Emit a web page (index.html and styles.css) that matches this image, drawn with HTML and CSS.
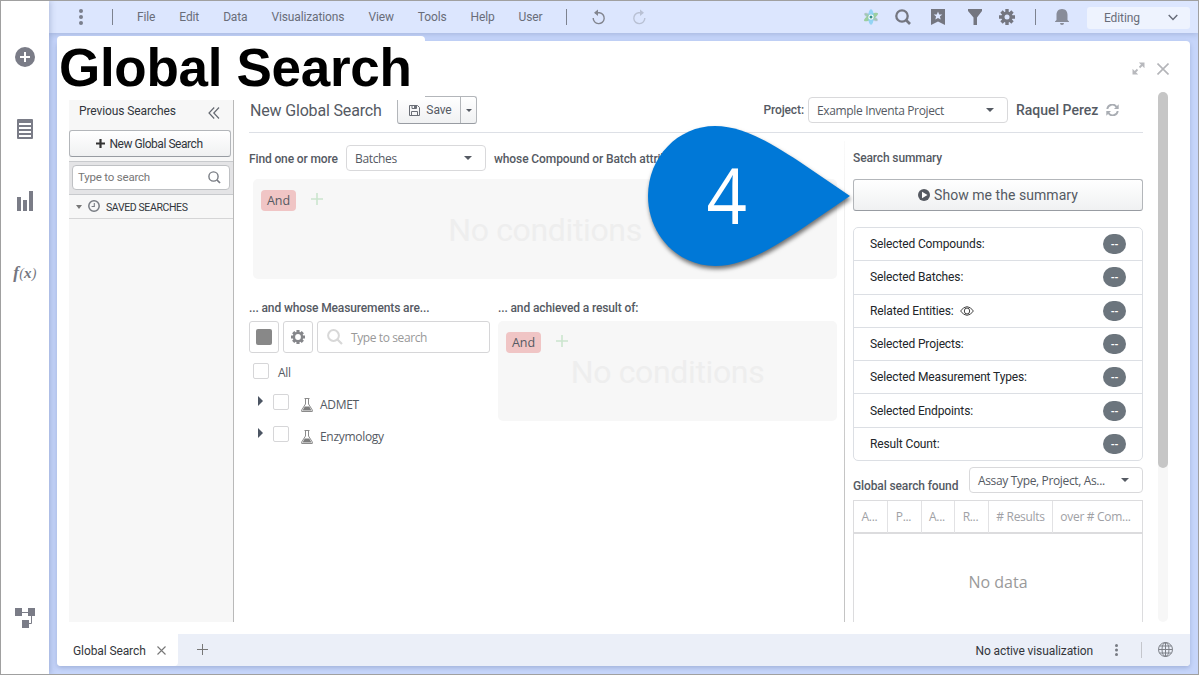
FILE: index.html
```html
<!DOCTYPE html>
<html lang="en">
<head>
    <meta charset="utf-8">
    <title>Global Search</title>
    <link rel="stylesheet" href="styles.css">
</head>
<body>
<div class="app">
    <nav class="rail">
        <svg class="rail-add" width="20" height="20" viewBox="0 0 20 20"><circle cx="10" cy="10" r="10" fill="#7a7c87"/><path d="M10 5v10M5 10h10" stroke="#fff" stroke-width="2"/></svg>
        <svg class="rail-list" width="16" height="20" viewBox="0 0 16 20"><rect width="16" height="20" rx="1" fill="#7a7c87"/><path d="M2 5h12M2 9h12M2 13h12M2 17h12" stroke="#fff" stroke-width="2"/></svg>
        <svg class="rail-bars" width="16" height="20" viewBox="0 0 16 20"><path d="M0 6h4v14H0zM6 9h4v11H6zM12 0h4v20h-4z" fill="#7a7c87"/></svg>
        <span class="rail-fx"><b>f</b>(<b class="x">x</b>)</span>
        <svg class="rail-flow" width="20" height="20" viewBox="0 0 20 20"><path d="M0 0h7v8H0zM13 0h7v8h-7zM7 12h7v8H7z" fill="#7a7c87"/><path d="M7 4.500h6M16.500 8v7.500H14" fill="none" stroke="#7a7c87"/></svg>
    </nav>

    <div class="main">
        <header class="topbar">
            <svg class="dots" width="4" height="16" viewBox="0 0 4 16" fill="#7a7f8d"><circle cx="2" cy="2" r="2"/><circle cx="2" cy="8" r="2"/><circle cx="2" cy="14" r="2"/></svg>
            <i class="bar"></i>
            <div class="menu">
                <span>File</span><span>Edit</span><span>Data</span><span>Visualizations</span><span>View</span><span>Tools</span><span>Help</span><span>User</span>
            </div>
            <i class="bar"></i>
            <svg class="undo" width="14" height="16" viewBox="0 0 14 16"><path d="M3 3.700h4.500a5.500 5.500 0 1 1-6.300 5.300" fill="none" stroke="#82858f" stroke-width="1.400"/><path d="M6 .4v6.600L2 3.700z" fill="#82858f"/></svg>
            <svg class="redo" width="14" height="16" viewBox="0 0 14 16"><path d="M11 3.700H6.500a5.500 5.500 0 1 0 6.300 5.300" fill="none" stroke="#b9c1d4" stroke-width="1.400"/><path d="M8 .4v6.600L12 3.700z" fill="#b9c1d4"/></svg>
            <div class="tools">
                <svg width="16" height="16" viewBox="0 0 16 16"><ellipse cx="8" cy="8" rx="2.600" ry="7.800" fill="#c3ccdf" transform="rotate(-62 8 8)"/><ellipse cx="8" cy="8" rx="2.600" ry="7.800" fill="#9ccfa0" transform="rotate(62 8 8)"/><ellipse cx="8" cy="8" rx="2.800" ry="7.700" fill="#86d0f2" fill-opacity=".85"/><path d="M2 5l12 6" stroke="#8cc79a" stroke-width="2.500" stroke-opacity=".6"/><circle cx="8" cy="8" r="2.600" fill="#fff"/><circle cx="8" cy="8" r="1.500" fill="#34908c"/></svg>
                <svg width="16" height="16" viewBox="0 0 16 16"><circle cx="7" cy="7" r="5.700" fill="none" stroke="#747680" stroke-width="2.300"/><path d="M11 11l4 4" stroke="#747680" stroke-width="2.600"/></svg>
                <svg width="14" height="16" viewBox="0 0 14 16"><path d="M0 0h14v16l-7-3.500L0 16z" fill="#747680"/><path d="M7 2.500l1.200 2.900 3.100.2-2.400 2 .8 3L7 8.900l-2.700 1.700.8-3-2.400-2 3.100-.2z" fill="#dce6fe"/></svg>
                <svg width="14" height="16" viewBox="0 0 14 16"><path d="M0 0h14v2L9 8.500V16H5.500V8.500L0 2z" fill="#747680"/></svg>
                <svg width="16" height="16" viewBox="0 0 16 16"><g stroke="#747680" stroke-width="3.400"><path d="M8 0v16M0 8h16M2.500 2.500l11 11M13.500 2.500l-11 11"/></g><circle cx="8" cy="8" r="5.600" fill="#747680"/><circle cx="8" cy="8" r="2.500" fill="#dce6fe"/></svg>
            </div>
            <i class="bar"></i>
            <svg class="bell" width="14" height="16" viewBox="0 0 14 16"><path d="M7 0c4 0 5.500 2.800 5.500 6v5l1.500 1.500V13H0v-.5L1.500 11V6C1.500 2.800 3 0 7 0zM5 14h4a2 2 0 0 1-4 0z" fill="#888c99"/></svg>
            <div class="mode">Editing <svg width="10" height="7" viewBox="0 0 10 7"><path d="M.7 1L5 5.500 9.300 1" fill="none" stroke="#666b78" stroke-width="1.400"/></svg></div>
        </header>

        <div class="panel">
            <div class="window-buttons">
                <svg width="13" height="13" viewBox="0 0 13 13"><path d="M7.500 5.500L11 2M5.500 7.500L2 11" stroke="#b8b9bd" stroke-width="1.800"/><path d="M6.800.5h5.700v5.700zM.5 6.800v5.700h5.700z" fill="#b8b9bd"/></svg>
                <svg width="12" height="12" viewBox="0 0 12 12"><path d="M.5.5l11 11M11.500.5l-11 11" stroke="#b4b5b9" stroke-width="1.600"/></svg>
            </div>

            <div class="workspace">
                <aside class="previous">
                    <div class="previous-head">Previous Searches
                        <svg width="12" height="12" viewBox="0 0 12 12"><path d="M6.200.5L1 6l5.200 5.500M11 .5L5.800 6l5.200 5.500" fill="none" stroke="#666a72" stroke-width="1.200"/></svg>
                    </div>
                    <div class="button new-search"><svg width="9" height="9" viewBox="0 0 9 9"><path d="M4.500 0v9M0 4.500h9" stroke="#333" stroke-width="2.200"/></svg>New Global Search</div>
                    <div class="filter">
                        <div class="filter-box">Type to search <svg width="13" height="13" viewBox="0 0 13 13"><circle cx="5.500" cy="5.500" r="4.600" fill="none" stroke="#777b82" stroke-width="1.400"/><path d="M9 9l3 3" stroke="#777b82" stroke-width="1.700"/></svg></div>
                    </div>
                    <div class="saved">
                        <i class="caret"></i>
                        <svg width="12" height="12" viewBox="0 0 12 12"><circle cx="6" cy="6" r="5.200" fill="none" stroke="#777b82" stroke-width="1.500"/><path d="M6.300 3v3.500H3.600" fill="none" stroke="#777b82" stroke-width="1.100"/></svg>
                        <span>SAVED SEARCHES</span>
                    </div>
                </aside>

                <main class="content">
                    <div class="content-head">
                        <h2>New Global Search</h2>
                        <div class="button save">
                            <span><svg width="11" height="11" viewBox="0 0 11 11"><path d="M.5.5h8l2 2v8H.5z" fill="none" stroke="#6a6e76"/><path d="M2.500 10.500V6.500h6v4M3 .5v3h4.500v-3" fill="none" stroke="#6a6e76"/><path d="M5 1h2v2H5z" fill="#6a6e76"/></svg>Save</span>
                            <b><i class="caret"></i></b>
                        </div>
                        <label>Project:</label>
                        <div class="select project"><span>Example Inventa Project</span><i class="caret"></i></div>
                        <span class="user">Raquel Perez</span>
                        <svg width="13" height="12" viewBox="0 0 13 12"><path d="M1.300 5A5 5 0 0 1 10.500 3M11.700 7A5 5 0 0 1 2.500 9" fill="none" stroke="#a9adb3" stroke-width="1.900"/><path d="M12.700.3v4.700H8zM.3 11.700V7H5z" fill="#a9adb3"/></svg>
                    </div>

                    <div class="columns">
                        <section class="query">
                            <div class="find">
                                <span class="find-label">Find one or more</span>
                                <div class="select entity"><span>Batches</span><i class="caret"></i></div>
                                <span>whose Compound or Batch attributes are:</span>
                            </div>
                            <div class="conditions">
                                <span class="and">And</span>
                                <svg width="12" height="12" viewBox="0 0 12 12"><path d="M6 0v12M0 6h12" stroke="#cbe5ce" stroke-width="1.600"/></svg>
                                <p>No conditions</p>
                            </div>
                            <div class="lower">
                                <div class="measurements">
                                    <h3>... and whose Measurements are...</h3>
                                    <div class="measure-tools">
                                        <span class="tool"><i class="square"></i></span>
                                        <span class="tool"><svg width="14" height="14" viewBox="0 0 16 16"><g stroke="#85868a" stroke-width="3.600"><path d="M8 0v16M0 8h16M2.500 2.500l11 11M13.500 2.500l-11 11"/></g><circle cx="8" cy="8" r="6" fill="#85868a"/><circle cx="8" cy="8" r="3.300" fill="#fff"/></svg></span>
                                        <span class="measure-search"><svg width="16" height="16" viewBox="0 0 16 16"><circle cx="6.500" cy="6.500" r="5.400" fill="none" stroke="#d8d8d8" stroke-width="2"/><path d="M10.500 10.500l4.500 4.500" stroke="#d8d8d8" stroke-width="2.200"/></svg>Type to search</span>
                                    </div>
                                    <div class="node"><i class="check"></i><span>All</span></div>
                                    <div class="node child"><i class="expand"></i><i class="check"></i>
                                        <svg width="12" height="14" viewBox="0 0 12 14"><path d="M3.500.5h5M4.500.5V6L.7 12v1.500h10.600V12L7.500 6V.5" fill="none" stroke="#8b8b8b"/><path d="M3.800 8.500h4.400l2.300 4h-9z" fill="#7d7d7d"/></svg>
                                        <span>ADMET</span></div>
                                    <div class="node child"><i class="expand"></i><i class="check"></i>
                                        <svg width="12" height="14" viewBox="0 0 12 14"><path d="M3.500.5h5M4.500.5V6L.7 12v1.500h10.600V12L7.500 6V.5" fill="none" stroke="#8b8b8b"/><path d="M3.800 8.500h4.400l2.300 4h-9z" fill="#7d7d7d"/></svg>
                                        <span>Enzymology</span></div>
                                </div>
                                <div class="results">
                                    <h3>... and achieved a result of:</h3>
                                    <div class="conditions">
                                        <span class="and">And</span>
                                        <svg width="12" height="12" viewBox="0 0 12 12"><path d="M6 0v12M0 6h12" stroke="#cbe5ce" stroke-width="1.600"/></svg>
                                        <p>No conditions</p>
                                    </div>
                                </div>
                            </div>
                        </section>

                        <section class="summary">
                            <h3>Search summary</h3>
                            <div class="button show"><svg width="12" height="12" viewBox="0 0 12 12"><circle cx="6" cy="6" r="6" fill="#565a62"/><path d="M4 2.700l5.500 3.300L4 9.300z" fill="#fff"/></svg>Show me the summary</div>
                            <ul class="counts">
                                <li><span>Selected Compounds:</span><b>--</b></li>
                                <li><span>Selected Batches:</span><b>--</b></li>
                                <li><span>Related Entities:</span><svg width="14" height="10" viewBox="0 0 14 10"><path d="M.6 5Q3.500.7 7 .7T13.400 5Q10.500 9.300 7 9.300T.6 5z" fill="none" stroke="#444"/><ellipse cx="7" cy="5" rx="2.700" ry="3" fill="none" stroke="#444"/></svg><b>--</b></li>
                                <li><span>Selected Projects:</span><b>--</b></li>
                                <li><span>Selected Measurement Types:</span><b>--</b></li>
                                <li><span>Selected Endpoints:</span><b>--</b></li>
                                <li><span>Result Count:</span><b>--</b></li>
                            </ul>
                            <div class="found">
                                <h3>Global search found</h3>
                                <div class="select group"><span>Assay Type, Project, As...</span><i class="caret"></i></div>
                            </div>
                            <div class="grid">
                                <div class="grid-head"><span>A...</span><span>P...</span><span>A...</span><span>R...</span><span># Results</span><span>over # Com...</span></div>
                                <div class="grid-body">No data</div>
                            </div>
                        </section>
                    </div>
                </main>

                <div class="scrollbar"><i></i></div>
            </div>

            <footer class="status">
                <div class="tab">Global Search <svg width="9" height="9" viewBox="0 0 9 9"><path d="M.5.5l8 8M8.500.5l-8 8" stroke="#777" stroke-width="1.100"/></svg></div>
                <svg class="add-tab" width="11" height="11" viewBox="0 0 11 11"><path d="M5.500 0v11M0 5.500h11" stroke="#777"/></svg>
                <span class="state">No active visualization</span>
                <svg width="3" height="12" viewBox="0 0 3 12" fill="#777b83"><circle cx="1.500" cy="1.500" r="1.500"/><circle cx="1.500" cy="6" r="1.500"/><circle cx="1.500" cy="10.500" r="1.500"/></svg>
                <i class="bar"></i>
                <svg class="globe" width="15" height="15" viewBox="0 0 15 15"><g fill="none" stroke="#7d8088"><circle cx="7.500" cy="7.500" r="7"/><ellipse cx="7.500" cy="7.500" rx="3.500" ry="7"/><path d="M7.500.5v14M.5 7.500h14M1.500 4h12M1.500 11h12"/></g></svg>
            </footer>
        </div>
    </div>

    <h1 class="caption">Global Search</h1>

    <div class="callout">
        <svg width="202" height="140" viewBox="0 0 202 140"><path d="M202 70L152 36C117 13 92 0 67 0 30 0 0 31 0 70s30 70 67 70c25 0 50-13 85-36z" fill="#0078d7"/></svg>
        <span>4</span>
    </div>
</div>
</body>
</html>
```
FILE: styles.css
```css
* {
    box-sizing: border-box;
}
body {
    margin: 0;
    font-family: Roboto, sans-serif;
    font-size: 12px;
    letter-spacing: -0.1px;
    color: #555a63;
}
h1, h2, h3, p, ul {
    margin: 0;
    padding: 0;
}
h3 {
    font-size: 12px;
    font-weight: 500;
    line-height: 16px;
    letter-spacing: -0.12px;
}
svg {
    display: block;
    flex: none;
}
.app {
    position: relative;
    display: flex;
    width: 1199px;
    height: 675px;
    border: 1px solid #a0a0a0;
    overflow: hidden;
}

/* left rail */
.rail {
    width: 48px;
    background: #fff;
    display: flex;
    flex-direction: column;
    align-items: center;
    padding-top: 46px;
    z-index: 1;
    box-shadow: 1px 0 6px rgba(60, 80, 130, 0.3);
}
.rail-list { margin-top: 52px; }
.rail-bars { margin-top: 52px; }
.rail-fx {
    margin-top: 52px;
    height: 20px;
    font: italic 14px/20px "Liberation Serif", serif;
    letter-spacing: 0.2px;
    color: #747680;
}
.rail-fx b { font-size: 17px; }
.rail-fx .x { font-size: 15px; }
.rail-flow { margin-top: 325px; }

/* top bar */
.main {
    flex: 1;
    background: #c6d5fa;
    padding-right: 8px;
}
.topbar {
    display: flex;
    align-items: center;
    height: 32px;
    margin-right: -8px;
    padding-left: 30px;
    background: #dce6fe;
    box-shadow: 0 1px 6px rgba(60, 80, 130, 0.25);
    color: #696d79;
}
.bar {
    width: 1px;
    height: 16px;
    background: #7d828f;
}
.topbar .dots { margin-right: 29px; }
.menu {
    display: flex;
    gap: 24px;
    width: 453px;
    padding-left: 24px;
    letter-spacing: -0.13px;
}
.undo { margin-left: 25px; }
.redo { margin-left: 26px; }
.tools {
    display: flex;
    gap: 19px;
    margin: -1px 20px 0 auto;
    align-items: center;
}
.tools svg:nth-child(2) { margin-left: -3px; }
.tools svg:nth-child(3) { margin-left: 1px; }
.tools svg:nth-child(4) { margin-left: 4px; }
.tools svg:nth-child(5) { margin-left: -2px; }
.bell { margin-left: 19px; }
.mode {
    display: flex;
    align-items: center;
    justify-content: space-between;
    width: 103px;
    height: 22px;
    margin: 1px 8px 0 18px;
    padding: 0 12px 0 17px;
    border-radius: 3px;
    background: #eef3fe;
}

/* panel */
.panel {
    margin: 8px 0 0 8px;
    height: 625px;
    background: #fff;
    border-radius: 4px;
    overflow: hidden;
    box-shadow: 0 2px 4px rgba(60, 80, 130, 0.25);
}
.window-buttons {
    display: flex;
    justify-content: flex-end;
    align-items: center;
    gap: 12px;
    height: 51px;
    padding: 4px 21px 0 0;
}
.workspace {
    display: flex;
    height: 530px;
    padding: 0 22px 0 12px;
}
.button {
    border: 1px solid #b3b6ba;
    border-bottom-color: #989ca2;
    border-radius: 3px;
    background: linear-gradient(#fff, #f0f1f2);
    display: flex;
    align-items: center;
    justify-content: center;
}
.caret {
    border: 4px solid transparent;
    border-top: 4px solid #555a63;
    border-bottom: 0;
}
.select {
    display: flex;
    align-items: center;
    justify-content: space-between;
    height: 26px;
    padding: 0 13px 0 8px;
    border: 1px solid #d9d9db;
    border-radius: 4px;
    background: #fff;
    font-family: "Open Sans", sans-serif;
    font-weight: normal;
    letter-spacing: -0.35px;
}
.select span { padding-top: 1px; }

/* previous searches */
.previous {
    width: 165px;
    margin-top: 8px;
    border-right: 1px solid #b9b9b9;
    background: #f7f7f7;
    color: #32363c;
}
.previous-head {
    display: flex;
    justify-content: space-between;
    height: 30px;
    padding: 4px 13px 0 10px;
    font-size: 12px;
}
.previous-head svg { margin-top: 3px; }
.new-search {
    width: 162px;
    height: 27px;
    padding-right: 1px;
    gap: 4px;
    letter-spacing: -0.45px;
}
.filter {
    margin-top: 4px;
    height: 34px;
    padding: 3px 3px 0;
    border-top: 1px solid #c8cacd;
    border-bottom: 1px solid #c8cacd;
    background: #e4e4e6;
}
.filter-box {
    display: flex;
    align-items: center;
    justify-content: space-between;
    height: 25px;
    padding: 0 8px 1px 5px;
    border: 1px solid #bfc1c4;
    border-radius: 4px;
    background: #fff;
    color: #777;
    font-size: 11.500px;
    letter-spacing: -0.2px;
}
.saved {
    display: flex;
    align-items: center;
    height: 24px;
    padding-left: 7px;
    border-bottom: 1px solid #d5d5d6;
    font-size: 10.500px;
    letter-spacing: -0.38px;
}
.saved span { padding-top: 1px; }
.saved .caret {
    border-width: 4px 3px 0;
    border-top-color: #777;
}
.saved svg { margin: -2px 6px 0; }

/* content header */
.content {
    width: 894px;
    margin-left: 15px;
}
.content-head {
    display: flex;
    align-items: center;
    height: 41px;
    padding-bottom: 4px;
    border-bottom: 1px solid #dde0e6;
}
.content-head h2 {
    width: 148px;
    padding-left: 1px;
    font-size: 16px;
    font-weight: 400;
    letter-spacing: -0.17px;
}
.save {
    width: 80px;
    height: 28px;
}
.save span {
    display: flex;
    flex: 1;
    gap: 6px;
    align-items: center;
    justify-content: center;
    padding-left: 3px;
}
.save b {
    display: flex;
    width: 16px;
    height: 26px;
    align-items: center;
    justify-content: center;
    border-left: 1px solid #b3b6ba;
}
.save .caret { border-width: 3px 3px 0; }
.content-head label {
    margin-left: auto;
    margin-right: 4px;
    font-weight: 500;
}
.project { width: 200px; }
.user {
    width: 90px;
    margin-left: 8px;
    font-size: 14px;
    font-weight: 500;
    letter-spacing: 0;
}
.content-head > svg { margin-right: 24px; }

/* query */
.columns {
    display: flex;
    height: 489px;
    overflow: hidden;
}
.query {
    width: 596px;
    height: 481px;
    margin-top: 8px;
    padding: 4px 7px 0 0;
    border-right: 1px solid;
    border-image: linear-gradient(#fafafa, #c4c4c4 70%) 1;
}
.find {
    display: flex;
    align-items: center;
    gap: 8px;
    height: 26px;
    font-weight: 500;
    white-space: nowrap;
    overflow: hidden;
}
.find > span { padding-top: 1px; }
.find .find-label {
    width: 89px;
    letter-spacing: -0.13px;
}
.entity {
    width: 140px;
    flex: none;
}
.conditions {
    position: relative;
    height: 100px;
    border-radius: 5px;
    background: #f7f7f7;
    display: flex;
    padding: 11px 8px;
}
.find + .conditions { margin: 8px 0 0 4px; }
.and {
    width: 35px;
    height: 21px;
    border-radius: 4px;
    background: #f0c5c5;
    text-align: center;
    font: 12.500px/22px "Open Sans", sans-serif;
}
.conditions svg { margin: 3px 0 0 15px; }
.conditions p {
    position: absolute;
    inset: 0;
    text-align: center;
    font-size: 32px;
    line-height: 102px;
    letter-spacing: -0.35px;
    color: #eee;
}
.lower {
    display: flex;
    gap: 8px;
    margin-top: 21px;
}
.lower h3 { margin-bottom: 5px; }
.measurements { width: 241px; }
.results { width: 339px; }
.measure-tools {
    display: flex;
    gap: 4px;
    height: 32px;
    margin-bottom: 2px;
}
.tool, .measure-search {
    display: flex;
    align-items: center;
    justify-content: center;
    width: 30px;
    border: 1px solid #d6d6d8;
    border-radius: 3px;
}
.square {
    width: 16px;
    height: 16px;
    border-radius: 2px;
    background: #888;
}
.measure-search {
    flex: 1;
    justify-content: flex-start;
    gap: 8px;
    padding-left: 9px;
    font: 12px "Open Sans", sans-serif;
    letter-spacing: -0.4px;
    color: #999;
}
.node {
    display: flex;
    align-items: center;
    height: 32px;
    padding-left: 4px;
    font-family: "Open Sans", sans-serif;
    letter-spacing: -0.3px;
}
.node.child { padding-left: 9px; }
.node > span { margin: 3px 0 0 9px; }
.node svg { margin: 3px -2px 0 12px; }
.check {
    width: 16px;
    height: 16px;
    border: 1px solid #d6d6d8;
    border-radius: 2px;
}
.child .check { margin-top: -2px; }
.expand {
    margin: -4px 10px 0 0;
    border: 5px solid transparent;
    border-left: 5px solid #4c5563;
    border-right: 0;
}

/* summary */
.summary {
    width: 290px;
    margin-left: 8px;
    padding-top: 17px;
}
.show {
    height: 32px;
    margin: 13px 0 16px;
    gap: 4px;
    font-size: 14px;
    letter-spacing: 0.05px;
}
.counts {
    list-style: none;
    border: 1px solid #dcdfe4;
    border-radius: 5px;
    color: #212529;
    letter-spacing: -0.13px;
}
.counts li {
    display: flex;
    align-items: center;
    height: 33.290px;
    padding: 0 16px;
    border-bottom: 1px solid #dcdfe4;
}
.counts li:last-child {
    height: 32.290px;
    border: 0;
}
.counts svg { margin-left: 6px; }
.counts b {
    width: 23px;
    height: 20px;
    margin-left: auto;
    border-radius: 10px;
    background: #6c757d;
    color: #fff;
    font-size: 10px;
    line-height: 21px;
    text-align: center;
}
.found {
    display: flex;
    justify-content: space-between;
    align-items: flex-start;
    margin-top: 6px;
}
.found h3 { margin-top: 11px; }
.group { width: 174px; }
.grid {
    margin-top: 6px;
    border: 1px solid #dcdcde;
    font-family: "Open Sans", sans-serif;
    letter-spacing: -0.3px;
    color: #a0a1a5;
}
.grid-head {
    display: grid;
    grid-template-columns: 34px 34px 33px 34px 64px 1fr;
    height: 33px;
    border-bottom: 2px solid #dcdcde;
    line-height: 32px;
    text-align: center;
}
.grid-head span {
    padding-right: 2px;
    border-right: 1px solid #e2e2e4;
}
.grid-head span:nth-child(5) { padding: 0; }
.grid-head span:last-child {
    border: 0;
    padding-right: 4px;
}
.grid-body {
    height: 120px;
    padding-top: 37px;
    font-size: 16px;
    letter-spacing: 0;
    text-align: center;
    color: #9a9a9a;
}
.scrollbar {
    width: 10px;
    margin-left: 15px;
    border-radius: 5px;
    background: #f7f7f7;
}
.scrollbar i {
    display: block;
    height: 376px;
    border-radius: 5px;
    background: #c6c6c6;
}

/* status bar */
.status {
    display: flex;
    align-items: center;
    height: 32px;
    margin-top: 12px;
    padding-right: 17px;
    background: #ebeff8;
    color: #33363b;
}
.tab {
    display: flex;
    align-items: center;
    justify-content: space-between;
    width: 121px;
    height: 32px;
    padding: 1px 12px 0 16px;
    background: #fff;
    border-radius: 0 0 4px 4px;
}
.add-tab { margin: -1px 0 0 19px; }
.state { margin: 1px 22px 0 auto; }
.status .bar {
    margin: 0 16px 0 23px;
    background: #c4c6cc;
}
.globe { margin-top: -1px; }

/* title and numbered pointer over the window */
.caption {
    position: absolute;
    left: 56px;
    top: 35px;
    width: 368px;
    height: 64px;
    padding-left: 2px;
    border-radius: 4px 4px 0 0;
    background: #fff;
    font: bold 53px/63px "Liberation Sans", sans-serif;
    letter-spacing: -0.3px;
    color: #000;
}
.callout {
    position: absolute;
    left: 647px;
    top: 125px;
    filter: drop-shadow(1px 3px 2px rgba(0, 0, 0, 0.55));
}
.callout span {
    position: absolute;
    left: 57px;
    top: 16px;
    font: 76px/106px "Open Sans", sans-serif;
    transform: scaleX(0.93);
    color: #fff;
}
```
